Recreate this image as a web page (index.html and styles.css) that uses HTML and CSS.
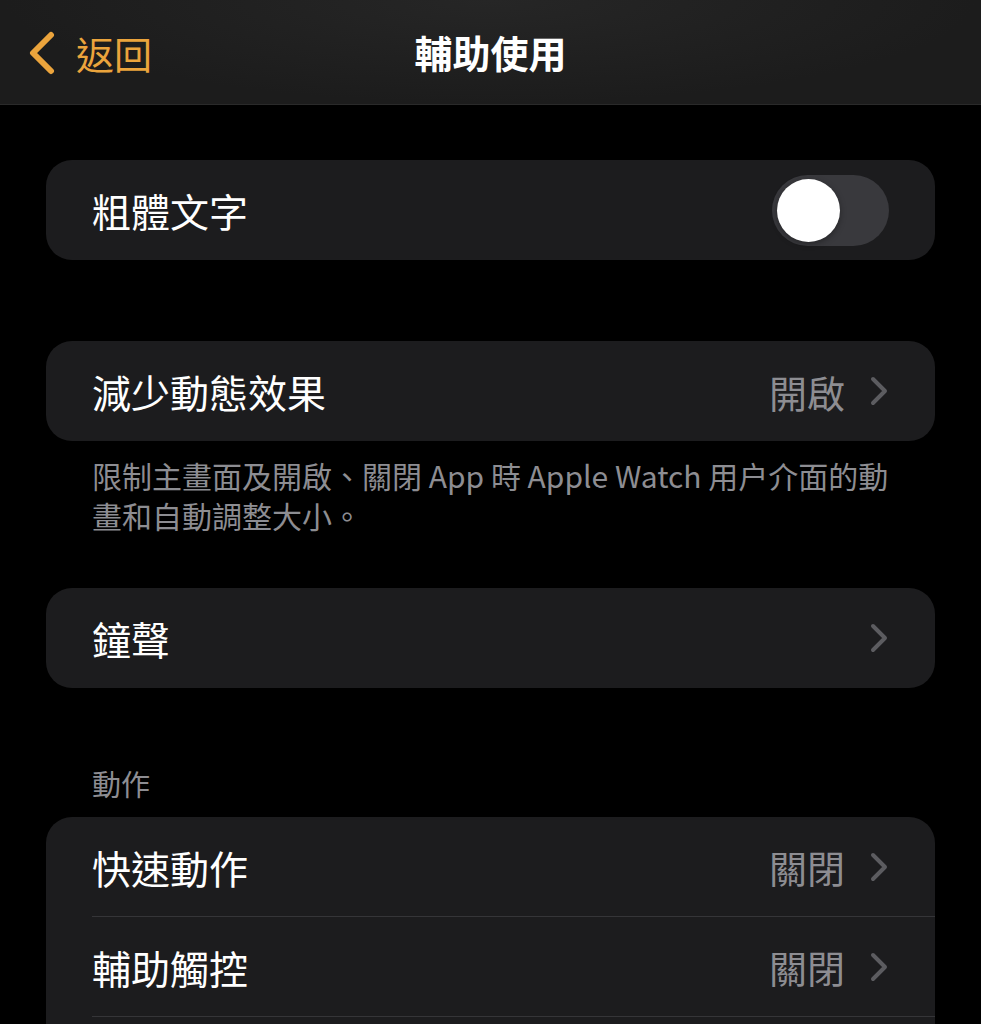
FILE: index.html
```html
<!DOCTYPE html>
<html lang="zh-Hant">
<head>
<meta charset="UTF-8">
<meta name="viewport" content="width=device-width, initial-scale=1.0">
<title>輔助使用</title>
<link rel="stylesheet" href="styles.css">
</head>
<body>
<div class="navbar">
    <a class="back" href="#">
        <svg class="back-icon" width="28" height="44" viewBox="0 0 28 44">
            <path d="M23 4 L5 22 L23 40" fill="none" stroke="#eba43c" stroke-width="6" stroke-linecap="round" stroke-linejoin="round"/>
        </svg>
        <span>返回</span>
    </a>
    <h1 class="title">輔助使用</h1>
</div>

<div class="content">
    <div class="card">
        <div class="row">
            <span class="label">粗體文字</span>
            <div class="toggle"><div class="knob"></div></div>
        </div>
    </div>

    <div class="card">
        <div class="row">
            <span class="label">減少動態效果</span>
            <span class="value">開啟</span>
            <svg class="chevron" width="20" height="30" viewBox="0 0 20 30">
                <path d="M4 3 L16 15 L4 27" fill="none" stroke="#5c5c60" stroke-width="4" stroke-linecap="round" stroke-linejoin="round"/>
            </svg>
        </div>
    </div>
    <p class="footer">限制主畫面及開啟、關閉 App 時 Apple Watch 用户介面的動畫和自動調整大小。</p>

    <div class="card">
        <div class="row">
            <span class="label">鐘聲</span>
            <svg class="chevron" width="20" height="30" viewBox="0 0 20 30">
                <path d="M4 3 L16 15 L4 27" fill="none" stroke="#5c5c60" stroke-width="4" stroke-linecap="round" stroke-linejoin="round"/>
            </svg>
        </div>
    </div>

    <div class="section-title">動作</div>
    <div class="card card-open">
        <div class="row">
            <span class="label">快速動作</span>
            <span class="value">關閉</span>
            <svg class="chevron" width="20" height="30" viewBox="0 0 20 30">
                <path d="M4 3 L16 15 L4 27" fill="none" stroke="#5c5c60" stroke-width="4" stroke-linecap="round" stroke-linejoin="round"/>
            </svg>
        </div>
        <div class="row">
            <span class="label">輔助觸控</span>
            <span class="value">關閉</span>
            <svg class="chevron" width="20" height="30" viewBox="0 0 20 30">
                <path d="M4 3 L16 15 L4 27" fill="none" stroke="#5c5c60" stroke-width="4" stroke-linecap="round" stroke-linejoin="round"/>
            </svg>
        </div>
        <div class="row">
            <span class="label">&nbsp;</span>
        </div>
    </div>
</div>
</body>
</html>
```

FILE: styles.css
```css
body {
    margin: 0;
    padding: 0;
    background: #000;
    color: #fff;
    font-family: "Noto Sans CJK TC", "Noto Sans", sans-serif;
    overflow: hidden;
}
.navbar {
    position: relative;
    height: 104px;
    background: radial-gradient(ellipse at 50% 0%, #262626 0%, #1c1c1c 70%);
    border-bottom: 1px solid #2a2a2a;
    display: flex;
    align-items: center;
    justify-content: center;
}
.back {
    position: absolute;
    left: 28px;
    top: 31px;
    display: flex;
    align-items: center;
    gap: 20px;
    color: #eba43c;
    text-decoration: none;
    font-size: 38px;
    line-height: 44px;
}
.title {
    margin: 0;
    font-size: 38px;
    font-weight: 700;
    line-height: 44px;
}
.content {
    padding: 55px 46px 0 46px;
}
.card {
    background: #1c1c1e;
    border-radius: 26px;
    margin-bottom: 81px;
    overflow: hidden;
}
.card-open {
    margin-bottom: 0;
}
.row {
    height: 100px;
    display: flex;
    align-items: center;
    margin-left: 46px;
    padding-right: 46px;
    border-bottom: 1px solid #353538;
    box-sizing: border-box;
}
.card .row:last-child {
    border-bottom: none;
}
.label {
    flex: 1;
    font-size: 39px;
    line-height: 50px;
}
.value {
    font-size: 38px;
    color: #8d8d92;
    margin-right: 24px;
}
.chevron {
    display: block;
}
.toggle {
    width: 117px;
    height: 71px;
    border-radius: 36px;
    background: #39393d;
    position: relative;
}
.knob {
    position: absolute;
    left: 5px;
    top: 4px;
    width: 63px;
    height: 63px;
    border-radius: 50%;
    background: #fff;
    box-shadow: 0 2px 6px rgba(0, 0, 0, 0.35);
}
.footer {
    margin: -67px 0 53px 0;
    padding: 0 40px 0 46px;
    font-size: 30px;
    line-height: 40px;
    color: #8d8d92;
}
.section-title {
    margin: -3px 0 17px 46px;
    font-size: 29px;
    line-height: 34px;
    color: #8d8d92;
}
```
